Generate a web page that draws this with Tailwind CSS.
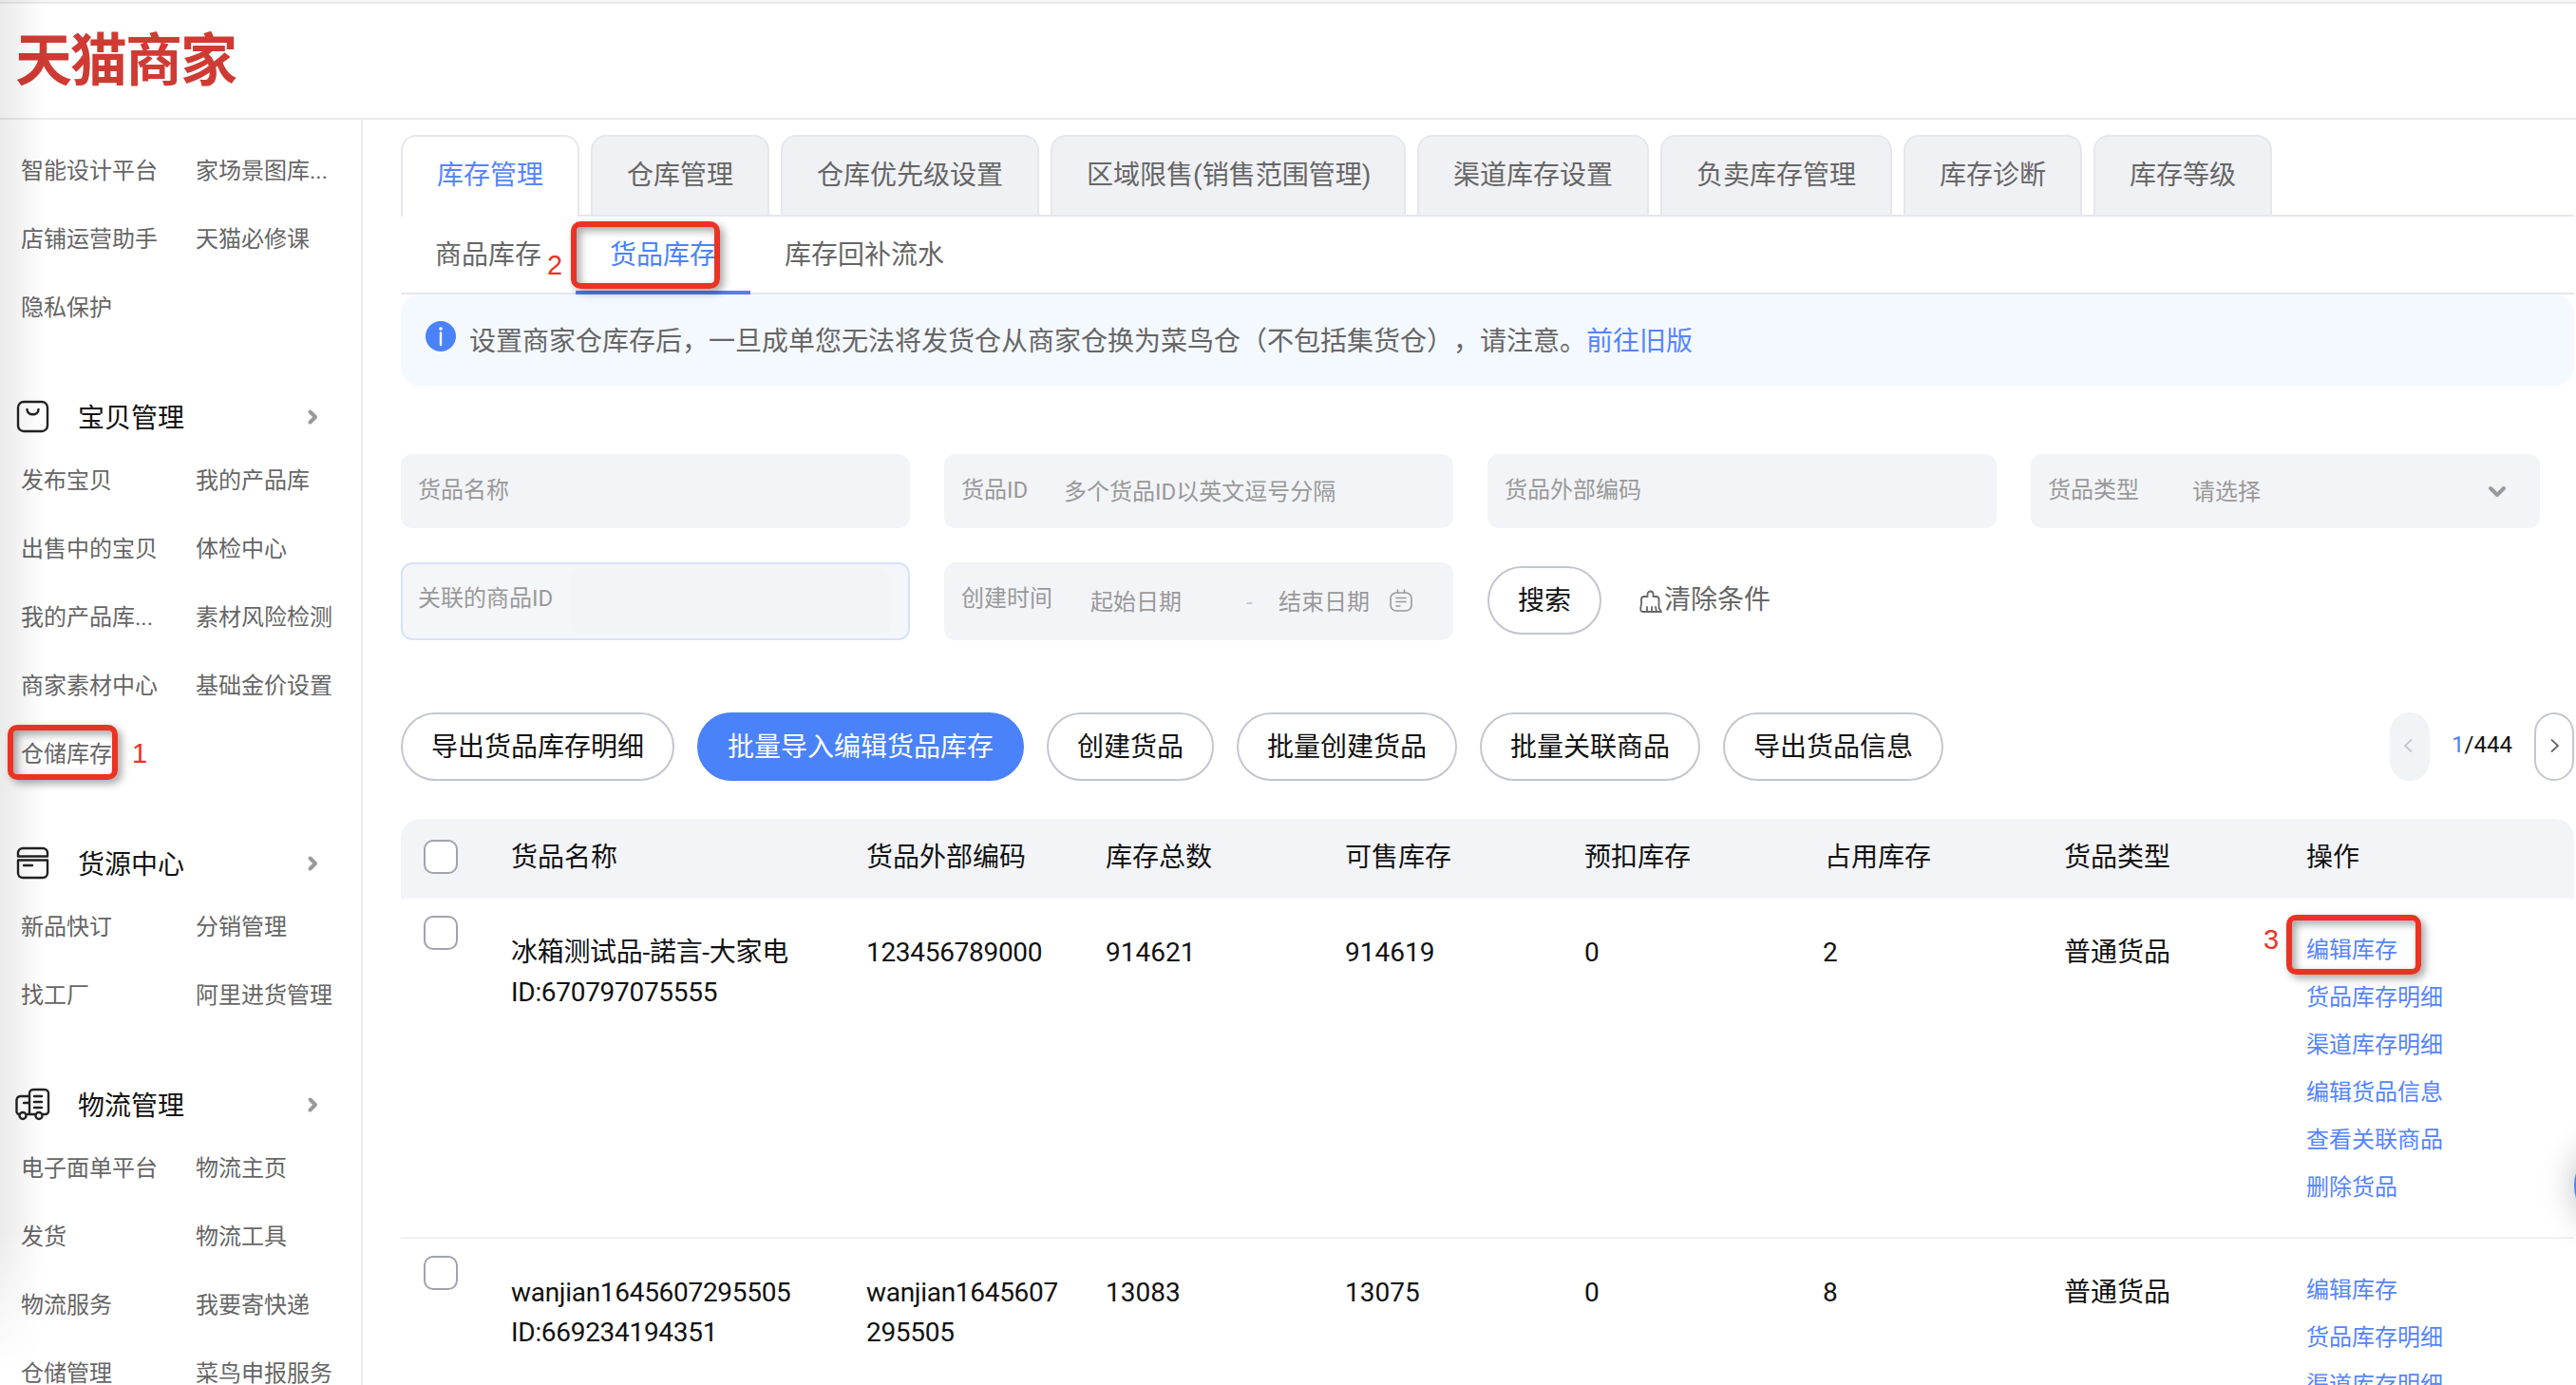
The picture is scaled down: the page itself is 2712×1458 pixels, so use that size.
<!DOCTYPE html>
<html lang="zh-CN">
<head>
  <meta charset="UTF-8" />
  <meta name="viewport" content="width=device-width, initial-scale=1.0"/>
  <title>天猫商家 - 货品库存</title>
  <script src="https://cdn.jsdelivr.net/npm/@tailwindcss/browser@4"></script>
</head>
<body class="relative w-[2712px] h-[1458px] overflow-hidden bg-white font-[Roboto,'Noto_Sans_CJK_SC',sans-serif] text-[28px] leading-[42px] text-[#111111] [text-spacing-trim:space-all]">
  <header class="h-[126px] border-b-2 border-[#ebebeb]">
    <div class="h-1 bg-[#f7f7f7] border-b-2 border-[#ebebeb]"></div>
    <div class="h-[118px] flex items-center pl-4 pt-1 text-[60px] leading-none font-bold tracking-[-2px] text-[#cf3b33]">天猫商家</div>
  </header>

  <div class="flex h-[1332px] overflow-hidden">
    <aside id="menu" class="w-[382px] shrink-0 border-r-2 border-[#ebebeb] pt-[18px] text-2xl text-[#666666]"></aside>

    <main class="w-[2288px] ml-10 pt-4 shrink-0">
      <nav class="flex gap-3 h-[86px] border-b-2 border-[#e6e7ed] text-[#666666]" id="tabs"></nav>

      <nav class="flex h-[82px] border-b-2 border-[#e6e7ed] text-[#666666] leading-[82px]">
        <a class="px-9">商品库存</a>
        <a class="px-9 h-[82px] border-b-4 border-[#4a82fa] text-[#4a82fa]">货品库存</a>
        <a class="px-9">库存回补流水</a>
      </nav>

      <div class="flex items-center h-24 rounded-[20px] bg-[#f4f8ff] pl-[26px] text-[#666666]">
        <svg class="w-8 h-8 -mt-2" viewBox="0 0 32 32"><circle cx="16" cy="16" r="16" fill="#4a82fa"/><circle cx="16" cy="8" r="1.8" fill="#fff"/><path d="M16 12.5V25" stroke="#fff" stroke-width="2.4" stroke-linecap="round"/></svg>
        <span class="ml-3.5 pt-1">设置商家仓库存后，一旦成单您无法将发货仓从商家仓换为菜鸟仓（不包括集货仓），请注意。</span><a class="pt-1 text-[#5584ff]">前往旧版</a>
      </div>

      <!-- filtros -->
      <section class="mt-[72px] grid grid-cols-[repeat(4,536px)] gap-9 text-2xl text-[#999999]">
        <div class="h-[78px] rounded-xl bg-[#f3f4f8] px-[18px] leading-[77px]">货品名称</div>
        <div class="h-[78px] rounded-xl bg-[#f3f4f8] px-[18px] leading-[77px] flex">
          <span class="w-[108px]">货品ID</span><span class="pt-0.5">多个货品ID以英文逗号分隔</span>
        </div>
        <div class="h-[78px] rounded-xl bg-[#f3f4f8] px-[18px] leading-[77px]">货品外部编码</div>
        <div class="h-[78px] rounded-xl bg-[#f3f4f8] px-[18px] leading-[77px] flex">
          <span class="w-[152px]">货品类型</span><span class="pt-0.5 flex-1">请选择</span>
          <svg class="w-6 h-6 mt-[27px] mr-[15px]" viewBox="0 0 24 24" fill="none" stroke="#999" stroke-width="4" stroke-linecap="round" stroke-linejoin="round"><path d="M5 9l7 7 7-7"/></svg>
        </div>
        <div class="h-[82px] rounded-xl bg-[#f5f6fa] border-2 border-[#d7e2fb] px-4 leading-[73px] flex">
          <span class="w-[160px]">关联的商品ID</span><span class="my-1 w-[338px] rounded-xl bg-[#f3f4f8]"></span>
        </div>
        <div class="h-[82px] rounded-xl bg-[#f3f4f8] px-[18px] leading-[77px] flex">
          <span class="w-[136px]">创建时间</span><span class="pt-1 w-[164px]">起始日期</span><span class="pt-1 w-[34px] text-[#c4c6cf]">-</span><span class="pt-1 w-[117px]">结束日期</span>
          <svg class="w-6 h-6 mt-[28px]" viewBox="0 0 24 24" fill="none" stroke="#999" stroke-width="1.6" stroke-linecap="round"><rect x="1" y="4" width="22" height="19" rx="6"/><path d="M8.500 1v3M15.500 1v3M7 9.500h10M7 13.500h10M7 18h4"/></svg>
        </div>
        <div class="flex h-[72px] mt-1 text-[28px] leading-[72px]">
          <button class="w-[120px] h-[72px] rounded-full border-2 border-[#c4c6cf] text-[#111111] leading-[70px]">搜索</button>
          <a class="ml-10 flex text-[#666666]">
            <svg class="w-6 h-6 mt-[25px] mr-0.5" viewBox="0 0 24 24" fill="none" stroke="#666" stroke-width="1.8" stroke-linecap="round" stroke-linejoin="round"><path d="M8.500 7V4.500a3 3 0 0 1 6 0V7h3a3 3 0 0 1 3 3v9l2.500 4H3.500C.5 23 1 19 2 15v-5a3 3 0 0 1 3-3zM8 23v-5M13 23v-5M18 23l-1-5"/></svg>清除条件</a>
        </div>
      </section>

      <section class="mt-[76px] flex gap-6 leading-[70px]" id="acciones">
        <button class="h-[72px] px-[30px] rounded-full border-2 border-[#c4c6cf]">导出货品库存明细</button>
        <button class="h-[72px] px-[30px] rounded-full border-2 border-[#4a82fa] bg-[#4a82fa] text-white">批量导入编辑货品库存</button>
        <button class="h-[72px] px-[30px] rounded-full border-2 border-[#c4c6cf]">创建货品</button>
        <button class="h-[72px] px-[30px] rounded-full border-2 border-[#c4c6cf]">批量创建货品</button>
        <button class="h-[72px] px-[30px] rounded-full border-2 border-[#c4c6cf]">批量关联商品</button>
        <button class="h-[72px] px-[30px] rounded-full border-2 border-[#c4c6cf]">导出货品信息</button>
        <div class="ml-auto flex text-2xl leading-[68px]">
          <span class="w-[42px] h-[72px] rounded-full bg-[#f2f3f7] flex items-center justify-center"><svg class="w-4 h-4 -ml-1 -mt-0.5" viewBox="0 0 16 16" fill="none" stroke="#c4c6cf" stroke-width="1.8"><path d="M12 1.500L5 8l7 6.500"/></svg></span>
          <span class="w-[110px] pl-[23px]"><span class="text-[#4a82fa]">1</span>/444</span>
          <span class="w-[42px] h-[72px] rounded-full border-2 border-[#c4c6cf] flex items-center justify-center"><svg class="w-4 h-4 -mt-0.5" viewBox="0 0 16 16" fill="none" stroke="#666" stroke-width="1.8"><path d="M5 1.500L12 8l-7 6.500"/></svg></span>
        </div>
      </section>

      <section class="mt-10" id="tabla">
        <div class="grid grid-cols-[116px_374px_252px_252px_252px_253px_252px_255px_282px] h-[84px] rounded-t-[20px] bg-[#f3f4f8] leading-[82px]">
          <span class="w-9 h-9 ml-6 mt-[22px] rounded-[10px] border-2 border-[#a0a2ad] bg-white"></span>
          <span>货品名称</span><span>货品外部编码</span><span>库存总数</span><span>可售库存</span><span>预扣库存</span><span>占用库存</span><span>货品类型</span><span>操作</span>
        </div>
      </section>
    </main>
  </div>

  <!-- sombra del borde izquierdo -->
  <div class="absolute left-0 top-0 w-12 h-[1440px] bg-linear-to-r from-black/8 to-transparent mask-b-from-90% pointer-events-none"></div>

  <!-- botón flotante -->
  <div class="absolute left-[2710px] top-[1202px] w-[92px] h-[92px] rounded-full bg-[#4a82fa] shadow-[0_0_36px_rgba(0,0,0,0.25)]"></div>

  <!-- marcas de los pasos -->
  <div class="absolute left-[8px] top-[763px] w-[116px] h-[58px] rounded-[10px] border-6 border-[#ea3323] shadow-[4px_4px_8px_rgba(0,0,0,0.35),inset_4px_4px_8px_rgba(0,0,0,0.35)]"></div>
  <div class="absolute left-[139px] top-[772px] font-['Liberation_Sans',sans-serif] text-[29px] text-[#ea3323]">1</div>
  <div class="absolute left-[601px] top-[233px] w-[157px] h-[71px] rounded-[10px] border-6 border-[#ea3323] shadow-[4px_4px_8px_rgba(0,0,0,0.35),inset_4px_4px_8px_rgba(0,0,0,0.35)]"></div>
  <div class="absolute left-[576px] top-[258px] font-['Liberation_Sans',sans-serif] text-[29px] text-[#ea3323]">2</div>
  <div class="absolute left-[2407px] top-[963px] w-[142px] h-[63px] rounded-[10px] border-6 border-[#ea3323] shadow-[4px_4px_8px_rgba(0,0,0,0.35),inset_4px_4px_8px_rgba(0,0,0,0.35)]"></div>
  <div class="absolute left-[2383px] top-[968px] font-['Liberation_Sans',sans-serif] text-[29px] text-[#ea3323]">3</div>

  <script>
    const iconos = {
      bolsa: '<rect x="3" y="3" width="31" height="31" rx="6"/><path d="M12.500 11c0 7 12 7 12 0"/>',
      caja: '<path d="M3 11.500V8a5 5 0 0 1 5-5h21a5 5 0 0 1 5 5v3.500zM3 15.500h31V29a5 5 0 0 1-5 5H8a5 5 0 0 1-5-5zM9 21h9"/>',
      camion: '<path d="M15 29V7a4 4 0 0 1 4-4h12a4 4 0 0 1 4 4v19a3 3 0 0 1-3 3h-3M21 29h-9M4.500 29a3 3 0 0 1-3-3V14a4 4 0 0 1 4-4H15M9 17h6M20 10h8M20 16h8M20 22h8"/><circle cx="8" cy="30.500" r="3.500"/><circle cx="25" cy="30.500" r="3.500"/>'
    };

    const grupos = [
      { items: ["智能设计平台", "家场景图库...", "店铺运营助手", "天猫必修课", "隐私保护"] },
      { titulo: "宝贝管理", icono: "bolsa", items: ["发布宝贝", "我的产品库", "出售中的宝贝", "体检中心", "我的产品库...", "素材风险检测", "商家素材中心", "基础金价设置", "仓储库存"] },
      { titulo: "货源中心", icono: "caja", items: ["新品快订", "分销管理", "找工厂", "阿里进货管理"] },
      { titulo: "物流管理", icono: "camion", items: ["电子面单平台", "物流主页", "发货", "物流工具", "物流服务", "我要寄快递", "仓储管理", "菜鸟申报服务"] }
    ];

    document.getElementById('menu').innerHTML = grupos.map(g => `
      ${g.titulo ? `
      <div class="h-[60px] flex items-center pl-4 text-[28px] text-[#111111]">
        <svg class="w-9 h-9 -mt-1 overflow-visible" viewBox="0 0 36 36" fill="none" stroke="#222" stroke-width="2.400" stroke-linecap="round" stroke-linejoin="round">${iconos[g.icono]}</svg>
        <span class="ml-[30px] pt-0.5 w-[237px]">${g.titulo}</span>
        <svg class="w-5 h-5 -mt-0.5" viewBox="0 0 20 20" fill="none" stroke="#999" stroke-width="4" stroke-linecap="round" stroke-linejoin="round"><path d="M7.500 4.500L13 10l-5.500 5.500"/></svg>
      </div>` : ''}
      <div class="grid grid-cols-[184px_174px] pl-[22px] mb-[50px] leading-[72px]">
        ${g.items.map(i => `<a class="h-[72px] whitespace-nowrap">${i}</a>`).join('')}
      </div>
    `).join('');

    const tabs = ["库存管理", "仓库管理", "仓库优先级设置", "区域限售(销售范围管理)", "渠道库存设置", "负卖库存管理", "库存诊断", "库存等级"];

    document.getElementById('tabs').innerHTML = tabs.map((t, i) => `
      <a class="px-9 rounded-t-2xl border-2 border-[#e6e7ed] border-b-0 leading-[82px] whitespace-nowrap ${i === 3 ? 'w-[374px]' : ''} ${i === 0 ? 'h-[86px] bg-white text-[#5584ff]' : 'h-[84px] bg-[#f0f1f5]'}">${t}</a>
    `).join('');

    const filas = [
      { nombre: "冰箱测试品-諾言-大家电", id: "670797075555", codigo: "123456789000", total: 914621, venta: 914619, previo: 0, ocupado: 2 },
      { nombre: "wanjian1645607295505", id: "669234194351", codigo: "wanjian1645607295505", total: 13083, venta: 13075, previo: 0, ocupado: 8 }
    ];
    const operaciones = ["编辑库存", "货品库存明细", "渠道库存明细", "编辑货品信息", "查看关联商品", "删除货品"];

    filas.forEach(f => {
      document.getElementById('tabla').insertAdjacentHTML('beforeend', `
        <div class="grid grid-cols-[116px_374px_252px_252px_252px_253px_252px_255px_282px] h-[358px] border-b-2 border-[#f0f1f5] pt-9">
          <span class="w-9 h-9 ml-6 -mt-[18px] rounded-[10px] border-2 border-[#a0a2ad]"></span>
          <span class="tracking-[-0.3px]">${f.nombre}<br>ID:${f.id}</span>
          <span class="w-[210px] break-all tracking-[-0.3px]">${f.codigo}</span>
          <span>${f.total}</span>
          <span>${f.venta}</span>
          <span>${f.previo}</span>
          <span class="-ml-0.5">${f.ocupado}</span>
          <span>普通货品</span>
          <span class="-mt-[7px] flex flex-col text-2xl leading-[50px] text-[#5584ff]">${operaciones.map(o => `<a class="h-[50px] leading-[50px]">${o}</a>`).join('')}</span>
        </div>
      `);
    });
  </script>
</body>
</html>
